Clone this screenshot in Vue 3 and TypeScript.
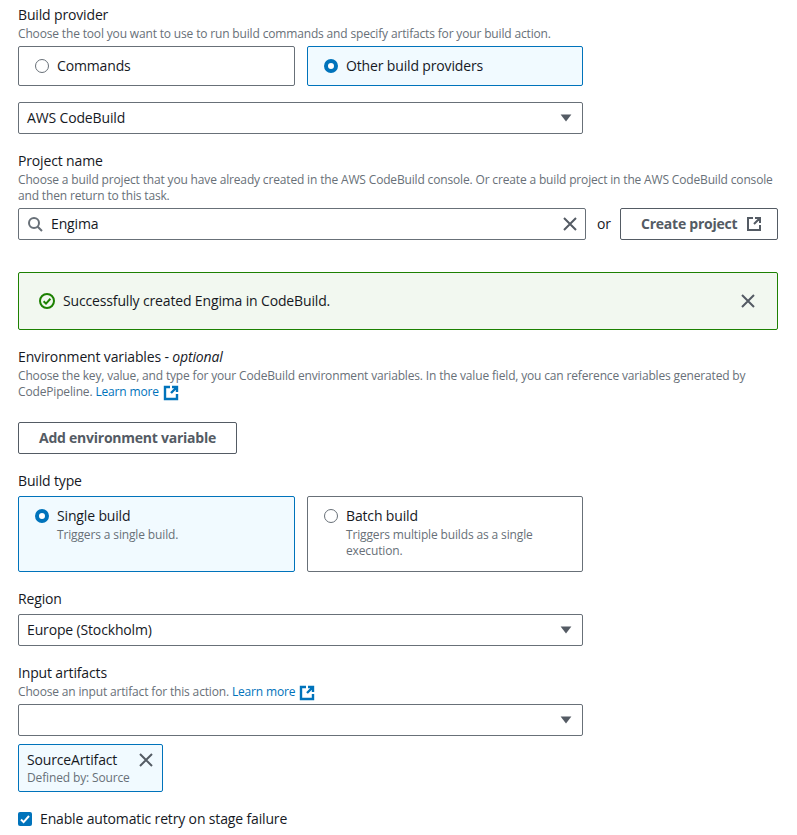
<script setup lang="ts">
const extPath = 'M7 2H2v12h12V9M9 2h5v5M14 2 8 8'
const xPath = 'm2 2 12 12M14 2 2 14'
const caretPath = 'M2.6 4.5h10.8L8 11.5z'
</script>

<template>
  <main class="page">
    <section class="provider">
      <div class="label">Build provider</div>
      <div class="desc">Choose the tool you want to use to run build commands and specify artifacts for your build action.</div>
      <div class="tiles tiles-short">
        <div class="tile">
          <span class="radio"></span>
          <span class="tile-title">Commands</span>
        </div>
        <div class="tile selected">
          <span class="radio on"></span>
          <span class="tile-title">Other build providers</span>
        </div>
      </div>
      <div class="select top16">
        <span>AWS CodeBuild</span>
        <svg width="16" height="16" viewBox="0 0 16 16"><path :d="caretPath" fill="#545b64" /></svg>
      </div>
    </section>

    <section class="field">
      <div class="label">Project name</div>
      <div class="desc">Choose a build project that you have already created in the AWS CodeBuild console. Or create a build project in the AWS CodeBuild console and then return to this task.</div>
      <div class="search-row">
        <div class="search">
          <svg width="16" height="16" viewBox="0 0 16 16" fill="none" stroke="#687078" stroke-width="2"><circle cx="7" cy="7" r="5" /><path d="M10.7 10.7 15 15" /></svg>
          <span class="search-text">Engima</span>
          <svg width="16" height="16" viewBox="0 0 16 16" fill="none" stroke="#545b64" stroke-width="2"><path :d="xPath" /></svg>
        </div>
        <span class="or">or</span>
        <button class="btn create">
          Create project
          <svg width="16" height="16" viewBox="0 0 16 16" fill="none" stroke="#545b64" stroke-width="2"><path :d="extPath" /></svg>
        </button>
      </div>
    </section>

    <section class="alert">
      <svg width="16" height="16" viewBox="0 0 16 16" fill="none" stroke="#1d8102" stroke-width="2"><circle cx="8" cy="8" r="7" /><path d="m4.6 8.2 2.4 2.4 4.4-4.8" /></svg>
      <span class="alert-text">Successfully created Engima in CodeBuild.</span>
      <svg width="16" height="16" viewBox="0 0 16 16" fill="none" stroke="#545b64" stroke-width="2"><path :d="xPath" /></svg>
    </section>

    <section class="field">
      <div class="label">Environment variables - <i>optional</i></div>
      <div class="desc">Choose the key, value, and type for your CodeBuild environment variables. In the value field, you can reference variables generated by CodePipeline. <a class="link">Learn more<svg class="ext" width="16" height="16" viewBox="0 0 16 16" fill="none" stroke="#0073bb" stroke-width="2.4"><path :d="extPath" /></svg></a></div>
      <button class="btn add">Add environment variable</button>
    </section>

    <section class="field">
      <div class="label">Build type</div>
      <div class="tiles tiles-tall">
        <div class="tile selected">
          <span class="radio on"></span>
          <div>
            <div class="tile-title">Single build</div>
            <div class="tile-desc">Triggers a single build.</div>
          </div>
        </div>
        <div class="tile">
          <span class="radio"></span>
          <div>
            <div class="tile-title">Batch build</div>
            <div class="tile-desc">Triggers multiple builds as a single execution.</div>
          </div>
        </div>
      </div>
    </section>

    <section class="field">
      <div class="label">Region</div>
      <div class="select top5">
        <span>Europe (Stockholm)</span>
        <svg width="16" height="16" viewBox="0 0 16 16"><path :d="caretPath" fill="#545b64" /></svg>
      </div>
    </section>

    <section class="field">
      <div class="label">Input artifacts</div>
      <div class="desc">Choose an input artifact for this action. <a class="link">Learn more<svg class="ext" width="16" height="16" viewBox="0 0 16 16" fill="none" stroke="#0073bb" stroke-width="2.4"><path :d="extPath" /></svg></a></div>
      <div class="select top4">
        <span></span>
        <svg width="16" height="16" viewBox="0 0 16 16"><path :d="caretPath" fill="#545b64" /></svg>
      </div>
      <div class="token">
        <div>
          <div class="tile-title">SourceArtifact</div>
          <div class="tile-desc">Defined by: Source</div>
        </div>
        <svg class="token-x" width="16" height="16" viewBox="0 0 16 16" fill="none" stroke="#545b64" stroke-width="2"><path :d="xPath" /></svg>
      </div>
    </section>

    <label class="check">
      <span class="box">
        <svg width="14" height="14" viewBox="0 0 14 14" fill="none" stroke="#fff" stroke-width="2"><path d="m3 7.5 2.6 2.6L11 4" /></svg>
      </span>
      <span>Enable automatic retry on stage failure</span>
    </label>
  </main>
</template>

<style>
html, body { margin: 0; background: #fff; }
</style>

<style scoped>
.page {
  width: 797px;
  height: 835px;
  box-sizing: border-box;
  padding: 5px 19px 0 18px;
  overflow: hidden;
  font-family: "Open Sans", "Noto Sans", sans-serif;
  font-size: 14px;
  line-height: 20px;
  letter-spacing: -0.15px;
  color: #16191f;
}
.field { margin-top: 17px; }
.label { line-height: 20px; }
.desc { margin-top: 1px; font-size: 12px; line-height: 16px; letter-spacing: -0.16px; color: #687078; }
.link { color: #0073bb; }
.ext { display: inline-block; vertical-align: middle; margin: -4px 0 -4px 4px; }
.tiles { display: grid; grid-template-columns: 277px 276px; column-gap: 12px; width: 565px; }
.tiles-short { margin-top: 4px; }
.tiles-short .tile { height: 40px; }
.tiles-tall { margin-top: 5px; }
.tiles-tall .tile { height: 76px; }
.tile {
  box-sizing: border-box;
  display: flex;
  align-items: flex-start;
  gap: 8px;
  padding: 9px 16px;
  border: 1px solid #687078;
  border-radius: 2px;
  background: #fff;
}
.tile.selected { border-color: #0073bb; background: #f1faff; }
.radio {
  flex: none;
  box-sizing: border-box;
  width: 14px;
  height: 14px;
  margin-top: 3px;
  border: 1.5px solid #687078;
  border-radius: 50%;
  background: #fff;
}
.radio.on { border: 4px solid #0073bb; }
.tile-title { line-height: 20px; }
.tile-desc { margin-top: 1px; font-size: 12px; line-height: 16px; letter-spacing: -0.14px; color: #687078; }
.select {
  box-sizing: border-box;
  width: 565px;
  height: 32px;
  display: flex;
  align-items: center;
  justify-content: space-between;
  padding: 0 8px;
  border: 1px solid #687078;
  border-radius: 2px;
  background: #fff;
}
.top16 { margin-top: 16px; }
.top5 { margin-top: 5px; }
.top4 { margin-top: 4px; }
.search-row { display: flex; align-items: center; margin-top: 4px; }
.search {
  box-sizing: border-box;
  flex: none;
  width: 568px;
  height: 32px;
  display: flex;
  align-items: center;
  padding: 0 7px 0 8px;
  border: 1px solid #687078;
  border-radius: 2px;
}
.search-text { margin-left: 8px; flex: 1; }
.or { margin-left: 11px; }
.btn {
  box-sizing: border-box;
  height: 32px;
  border: 1px solid #545b64;
  border-radius: 2px;
  background: #fff;
  color: #545b64;
  font: inherit;
  letter-spacing: -0.24px;
  font-weight: 700;
  align-items: center;
}
.create {
  display: flex;
  width: 158px;
  gap: 9px;
  padding: 0 0 0 20px;
  margin-left: auto;
}
.alert {
  box-sizing: border-box;
  margin-top: 32px;
  height: 58px;
  display: flex;
  align-items: center;
  padding: 0 21px 0 20px;
  border: 1px solid #1d8102;
  border-radius: 2px;
  background: #f2f8f0;
}
.alert-text { margin-left: 8px; flex: 1; }
.add { display: block; margin-top: 22px; width: 219px; padding: 0; }
.token {
  box-sizing: border-box;
  margin-top: 8px;
  width: 145px;
  height: 48px;
  display: flex;
  justify-content: space-between;
  padding: 5px 8px;
  border: 1px solid #0073bb;
  border-radius: 2px;
  background: #f1faff;
}
.token .tile-desc { margin-top: 0; }
.token-x { margin-top: 2px; }
.check { display: flex; align-items: center; gap: 8px; margin-top: 17px; }
.box {
  width: 14px;
  height: 14px;
  border-radius: 2px;
  background: #0073bb;
  display: flex;
}
</style>
